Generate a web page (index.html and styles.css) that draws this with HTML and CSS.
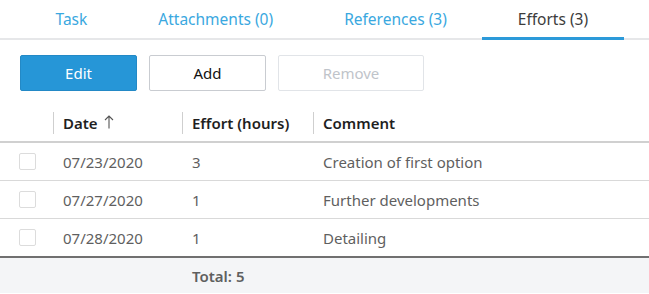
FILE: index.html
```html
<!DOCTYPE html>
<html lang="en">
<head>
    <meta charset="UTF-8">
    <meta name="viewport" content="width=device-width, initial-scale=1.0">
    <title>Task efforts</title>
    <link rel="stylesheet" href="styles.css">
</head>
<body>
    <div class="tabs">
        <div class="tab">Task</div>
        <div class="tab">Attachments (0)</div>
        <div class="tab">References (3)</div>
        <div class="tab active">Efforts (3)</div>
    </div>

    <div class="toolbar">
        <button class="btn btn-primary">Edit</button>
        <button class="btn">Add</button>
        <button class="btn btn-wide" disabled>Remove</button>
    </div>

    <table class="grid">
        <thead>
            <tr>
                <th class="col-check"></th>
                <th class="col-date"><div class="head">Date
                    <svg class="sort" width="10" height="14" viewBox="0 0 10 14">
                        <path d="M5 13.5V1M1 5l4-4 4 4" fill="none" stroke="#555" stroke-width="1.1"/>
                    </svg></div></th>
                <th class="col-effort"><div class="head">Effort (hours)</div></th>
                <th><div class="head">Comment</div></th>
            </tr>
        </thead>
        <tbody>
            <tr>
                <td><span class="check"></span></td>
                <td>07/23/2020</td>
                <td>3</td>
                <td>Creation of first option</td>
            </tr>
            <tr>
                <td><span class="check"></span></td>
                <td>07/27/2020</td>
                <td>1</td>
                <td>Further developments</td>
            </tr>
            <tr>
                <td><span class="check"></span></td>
                <td>07/28/2020</td>
                <td>1</td>
                <td>Detailing</td>
            </tr>
        </tbody>
        <tfoot>
            <tr>
                <td></td>
                <td></td>
                <td class="total">Total: 5</td>
                <td></td>
            </tr>
        </tfoot>
    </table>
</body>
</html>
```

FILE: styles.css
```css
body {
    margin: 0;
    font-family: "Noto Sans", "Open Sans", sans-serif;
    font-size: 15px;
    color: #3c3c3c;
    background: #fff;
}
.tabs {
    display: flex;
    padding-left: 20px;
    border-bottom: 2px solid #e6e7e9;
}
.tab {
    padding: 0 35.5px;
    height: 37px;
    line-height: 39px;
    font-size: 15.5px;
    color: #3aa8e0;
    border-bottom: 3px solid transparent;
    margin-bottom: -2px;
}
.tab.active {
    color: #3c3c3c;
    border-bottom-color: #2c9ad9;
}
.toolbar {
    display: flex;
    gap: 12px;
    padding: 15px 20px 0;
}
.btn {
    width: 117px;
    height: 36px;
    font-family: inherit;
    font-size: 15px;
    color: #111;
    background: #fff;
    border: 1px solid #c9ccd1;
    border-radius: 2px;
}
.btn-primary {
    background: #2696d7;
    border-color: #2389c6;
    color: #fff;
}
.btn-wide {
    width: 146px;
}
.btn:disabled {
    color: #bfc4ca;
    border-color: #e1e4e8;
}
.grid {
    width: 100%;
    border-collapse: collapse;
    margin-top: 13px;
}
.grid th {
    height: 37px;
    padding: 0;
    text-align: left;
    font-weight: 600;
    color: #1f1f1f;
    border-bottom: 2px solid #d0d0d0;
}
.col-check {
    width: 53px;
}
.col-date {
    width: 129px;
}
.col-effort {
    width: 131px;
}
.head {
    display: flex;
    align-items: center;
    gap: 6px;
    height: 22px;
    padding-left: 9px;
    border-left: 1px solid #cfcfcf;
}
.sort {
    margin-top: -1px;
}
.grid td {
    height: 37px;
    padding: 0 0 0 10px;
    color: #5f5f5f;
    border-bottom: 1px solid #d9d9d9;
}
.grid tbody tr:last-child td {
    border-bottom: 2px solid #707070;
}
.grid td:first-child {
    padding-left: 19px;
}
.check {
    display: block;
    width: 15px;
    height: 15px;
    border: 1px solid #dcdcdc;
    border-radius: 2px;
}
.grid tfoot td {
    height: 35px;
    background: #f4f5f7;
    border-bottom: none;
}
.total {
    font-weight: 600;
    color: #333;
}
```
